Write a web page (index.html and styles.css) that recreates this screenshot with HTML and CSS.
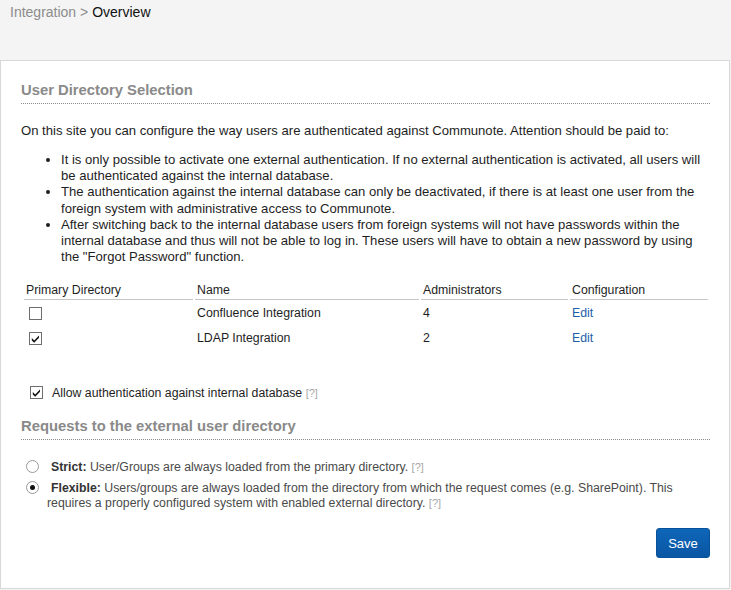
FILE: index.html
```html
<!DOCTYPE html>
<html>
<head>
<meta charset="utf-8">
<link rel="stylesheet" href="styles.css">
</head>
<body>
<div class="breadcrumb"><span class="crumb-parent">Integration</span> <span class="crumb-sep">&gt;</span> <span class="crumb-current">Overview</span></div>
<div class="card">
  <h2 class="section-title">User Directory Selection</h2>
  <p class="intro">On this site you can configure the way users are authenticated against Communote. Attention should be paid to:</p>
  <ul class="notes">
    <li>It is only possible to activate one external authentication. If no external authentication is activated, all users will be authenticated against the internal database.</li>
    <li>The authentication against the internal database can only be deactivated, if there is at least one user from the foreign system with administrative access to Communote.</li>
    <li>After switching back to the internal database users from foreign systems will not have passwords within the internal database and thus will not be able to log in. These users will have to obtain a new password by using the "Forgot Password" function.</li>
  </ul>
  <table class="dirs">
    <thead>
      <tr>
        <th class="c1">Primary Directory</th>
        <th class="c2">Name</th>
        <th class="c3">Administrators</th>
        <th class="c4">Configuration</th>
      </tr>
    </thead>
    <tbody>
      <tr>
        <td><span class="cb"></span></td>
        <td>Confluence Integration</td>
        <td>4</td>
        <td><a class="link" href="#">Edit</a></td>
      </tr>
      <tr>
        <td><span class="cb checked"><svg viewBox="0 0 13 13" width="13" height="13"><path d="M2.8 6 L5.2 8.4 L10 3.4 L10 5.8 L5.2 10.8 L2.8 8.4 Z" fill="#111"/></svg></span></td>
        <td>LDAP Integration</td>
        <td>2</td>
        <td><a class="link" href="#">Edit</a></td>
      </tr>
    </tbody>
  </table>
  <div class="allow">
    <span class="cb checked allow-cb"><svg viewBox="0 0 13 13" width="13" height="13"><path d="M2.8 6 L5.2 8.4 L10 3.4 L10 5.8 L5.2 10.8 L2.8 8.4 Z" fill="#111"/></svg></span><span class="allow-text">Allow authentication against internal database</span> <span class="help">[?]</span>
  </div>
  <h2 class="section-title second">Requests to the external user directory</h2>
  <div class="options">
    <div class="opt"><span class="radio"></span><b>Strict:</b> User/Groups are always loaded from the primary directory. <span class="help">[?]</span></div>
    <div class="opt"><span class="radio on"><span class="dot"></span></span><b>Flexible:</b> Users/groups are always loaded from the directory from which the request comes (e.g. SharePoint). This requires a properly configured system with enabled external directory. <span class="help">[?]</span></div>
  </div>
  <div class="actions"><button class="save">Save</button></div>
</div>
</body>
</html>
```
FILE: styles.css
```css
html, body {
  margin: 0;
  padding: 0;
}
body {
  background: #f4f4f4;
  font-family: "Liberation Sans", Arial, sans-serif;
  font-size: 13.1px;
  color: #1e1e1e;
  width: 731px;
  height: 590px;
  overflow: hidden;
}
.breadcrumb {
  padding: 4px 10px 0;
  height: 56px;
  box-sizing: border-box;
  font-size: 14px;
  line-height: 16px;
}
.crumb-parent, .crumb-sep { color: #8c8c8c; }
.crumb-current { color: #111; }

.card {
  background: #fff;
  border: 1px solid #d8d8d8;
  margin: 4px 1px 0 0;
  padding: 20px 19px 29px 20px;
  height: 529px;
  box-sizing: border-box;
}
.section-title {
  margin: 0;
  font-size: 14.8px;
  line-height: 18px;
  font-weight: bold;
  color: #8a8a8a;
  padding-bottom: 4px;
  border-bottom: 1px dotted #8a8a8a;
}
.section-title.second {
  margin-top: 16px;
}
.intro {
  margin: 19px 0 0;
  line-height: 16px;
}
.notes {
  margin: 13px 0 0;
  padding-left: 40px;
  line-height: 16.2px;
}
.dirs {
  margin: 17px 0 0 1px;
  border-collapse: separate;
  border-spacing: 2px 0;
  width: 688px;
  table-layout: fixed;
  font-size: 12.3px;
}
.dirs th {
  text-align: left;
  font-weight: normal;
  line-height: 16px;
  padding: 0 2px 1px;
  border-bottom: 1px solid #c6c6c6;
}
.dirs td {
  height: 25px;
  padding: 0 2px;
  line-height: 16px;
  vertical-align: middle;
}
.c1 { width: 165px; }
.c2 { width: 220px; }
.c3 { width: 143px; }
.link {
  color: #1d5ea8;
  text-decoration: none;
}
.cb {
  display: inline-block;
  width: 11px;
  height: 11px;
  border: 1px solid #6e6e6e;
  background: #fff;
  margin-left: 3px;
  vertical-align: middle;
  position: relative;
}
.cb svg {
  position: absolute;
  left: -1px;
  top: -1px;
}
.allow {
  margin-top: 35px;
  padding-left: 9px;
  line-height: 16px;
  font-size: 12.3px;
}
.allow-cb {
  margin-left: 0;
  margin-right: 9px;
  vertical-align: -2px;
}
.help {
  color: #a8a8a8;
  font-size: 11px;
}
.options {
  margin-top: 20px;
  font-size: 12.3px;
  line-height: 15px;
  color: #4a4a4a;
}
.options b {
  color: #333;
}
.opt {
  padding-left: 26px;
  margin-bottom: 6px;
}
.radio {
  display: inline-block;
  width: 11px;
  height: 11px;
  border: 1px solid #999;
  border-radius: 50%;
  background: #fff;
  margin-left: -21px;
  margin-right: 12px;
  vertical-align: -2px;
  position: relative;
  box-sizing: content-box;
}
.radio .dot {
  position: absolute;
  left: 3px;
  top: 3px;
  width: 5px;
  height: 5px;
  border-radius: 50%;
  background: #111;
}
.actions {
  display: flex;
  justify-content: flex-end;
  margin-top: 17px;
}
.save {
  width: 54px;
  height: 30px;
  border: 1px solid #0a519b;
  border-radius: 3px;
  background: linear-gradient(#0e66b8, #0a56a4);
  color: #fff;
  font-family: "Liberation Sans", Arial, sans-serif;
  font-size: 13px;
  padding: 0;
  margin-right: 0;
}
```
